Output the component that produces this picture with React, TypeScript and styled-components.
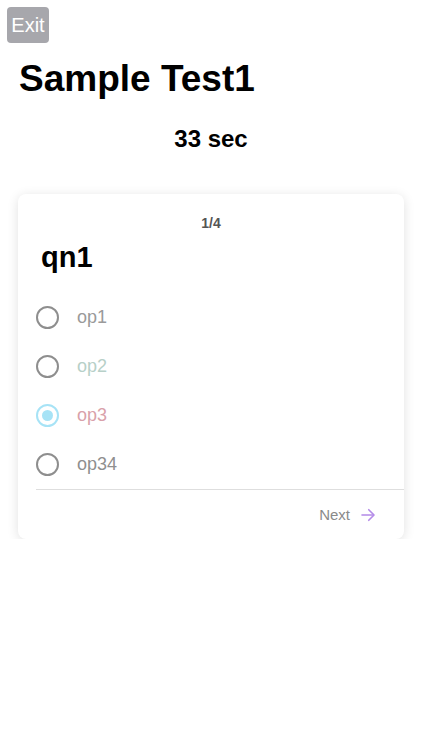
import React, { useState } from 'react';
import styled, { createGlobalStyle } from 'styled-components';

const OPTIONS = [
  { label: 'op1', color: '#9a9a9a' },
  { label: 'op2', color: '#b7d0c8' },
  { label: 'op3', color: '#d9a1aa' },
  { label: 'op34', color: '#8f8f8f' },
];

const GlobalStyle = createGlobalStyle`
  html, body {
    margin: 0;
    padding: 0;
    background: #fff;
  }
  body {
    font-family: "Liberation Sans", Arial, sans-serif;
  }
`;

const App: React.FC = () => {
  const [selected, setSelected] = useState(2);
  return (
    <Page>
      <GlobalStyle />
      <ExitButton>Exit</ExitButton>
      <Title>Sample Test1</Title>
      <Timer>33 sec</Timer>
      <Card>
        <Counter>1/4</Counter>
        <Question>qn1</Question>
        <OptionList>
          {OPTIONS.map((opt, i) => (
            <OptionRow key={opt.label} onClick={() => setSelected(i)}>
              <Radio checked={selected === i} />
              <OptionLabel color={opt.color}>{opt.label}</OptionLabel>
            </OptionRow>
          ))}
        </OptionList>
        <Footer>
          <NextButton>
            Next
            <svg width="18" height="18" viewBox="0 0 24 24" fill="none" stroke="#b48be8" strokeWidth="2.2" strokeLinecap="round" strokeLinejoin="round">
              <path d="M4 12h15" />
              <path d="M13 5l7 7-7 7" />
            </svg>
          </NextButton>
        </Footer>
      </Card>
    </Page>
  );
};

const Page = styled('div')`
  display: flex;
  flex-direction: column;
  padding: 7px 18px 0 7px;
`;

const ExitButton = styled('button')`
  align-self: flex-start;
  width: 42px;
  height: 36px;
  border: none;
  border-radius: 4px;
  background: #a7a7ac;
  color: #fff;
  font-family: "Liberation Sans", Arial, sans-serif;
  font-size: 20px;
  padding: 0;
`;

const Title = styled('h1')`
  margin: 14px 0 0 12px;
  font-size: 37px;
  font-weight: 700;
  color: #000;
  line-height: 44px;
`;

const Timer = styled('div')`
  margin-top: 24px;
  text-align: center;
  padding-left: 11px;
  font-size: 24px;
  font-weight: 700;
  color: #000;
  line-height: 28px;
`;

const Card = styled('div')`
  margin: 41px 0 0 11px;
  background: #fff;
  border-radius: 8px;
  box-shadow: 0 2px 12px rgba(0, 0, 0, 0.12);
  display: flex;
  flex-direction: column;
  padding-top: 21px;
`;

const Counter = styled('div')`
  text-align: center;
  font-size: 14px;
  font-weight: 700;
  color: #555;
  line-height: 16px;
`;

const Question = styled('div')`
  margin: 9px 0 0 23px;
  font-size: 29px;
  font-weight: 700;
  color: #000;
  line-height: 34px;
`;

const OptionList = styled('div')`
  display: flex;
  flex-direction: column;
  margin-top: 19px;
  padding-left: 18px;
`;

const OptionRow = styled('label')`
  display: flex;
  align-items: center;
  height: 49px;
  gap: 18px;
  cursor: pointer;
`;

const Radio = styled('span')<{ checked: boolean }>`
  box-sizing: border-box;
  width: 23px;
  height: 23px;
  border-radius: 50%;
  border: 2px solid ${(p) => (p.checked ? '#a7e3f6' : '#8e8e8e')};
  display: flex;
  align-items: center;
  justify-content: center;
  &::after {
    content: '';
    width: 11px;
    height: 11px;
    border-radius: 50%;
    background: ${(p) => (p.checked ? '#a7e3f6' : 'transparent')};
  }
`;

const OptionLabel = styled('span')<{ color: string }>`
  font-size: 18px;
  color: ${(p) => p.color};
`;

const Footer = styled('div')`
  margin: 0 0 0 18px;
  border-top: 1px solid #dedede;
  display: flex;
  justify-content: flex-end;
  height: 49px;
  align-items: center;
  padding-right: 27px;
`;

const NextButton = styled('button')`
  display: flex;
  align-items: center;
  gap: 9px;
  border: none;
  background: transparent;
  padding: 0;
  font-family: "Liberation Sans", Arial, sans-serif;
  font-size: 15px;
  color: #8a8a8a;
`;

export default App;
